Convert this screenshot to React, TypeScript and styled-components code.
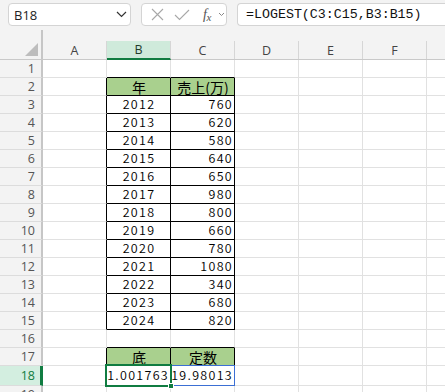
import React from "react";
import styled, { createGlobalStyle, css } from "styled-components";

const GlobalStyle = createGlobalStyle`
  html, body { margin: 0; padding: 0; background: #ffffff; overflow: hidden; }
  * { box-sizing: border-box; }
`;

const COLS = ["A", "B", "C", "D", "E", "F", "G"];
const GRID = "43px repeat(7, 64px)";
const GRIDLINE = "#e1e1e1";
const GREEN = "#107c41";

const Page = styled.div`
  width: 445px;
  height: 392px;
  overflow: hidden;
  background: #f3f3f3;
  font-family: "Open Sans", "Noto Sans", sans-serif;
`;

const Toolbar = styled.div`
  display: flex;
  align-items: flex-start;
  height: 30px;
  padding: 3px 0 0 8px;
  gap: 10px;
`;

const Box = styled.div<{ $w?: number; $grow?: boolean }>`
  height: 23px;
  background: #ffffff;
  border: 1px solid #d4d4d4;
  border-radius: 4px;
  display: flex;
  align-items: center;
  flex-shrink: 0;
  ${(p) => (p.$w ? css`width: ${p.$w}px;` : "")}
  ${(p) => (p.$grow ? css`flex: 1 0 auto; border-right: none; border-radius: 4px 0 0 4px;` : "")}
`;

const NameText = styled.span`
  flex: 1;
  padding-left: 5px;
  font-family: "Open Sans", "Noto Sans", sans-serif;
  font-size: 13px;
  color: #222;
`;

const FormulaText = styled.span`
  padding-left: 8px;
  font-family: "Liberation Mono", "DejaVu Sans Mono", monospace;
  font-size: 13.3px;
  color: #111;
  white-space: nowrap;
`;

const IconSlot = styled.span<{ $w: number; $ml?: number }>`
  display: inline-flex;
  align-items: center;
  justify-content: center;
  width: ${(p) => p.$w}px;
  margin-left: ${(p) => p.$ml ?? 0}px;
`;

const Fx = styled.span`
  font-family: "Liberation Serif", "DejaVu Serif", serif;
  font-style: italic;
  font-size: 14px;
  color: #555;
  letter-spacing: -0.5px;
  span { font-size: 11px; position: relative; top: 2px; }
`;

const HeaderRow = styled.div`
  display: grid;
  grid-template-columns: ${GRID};
  height: 30px;
  border-bottom: 1px solid #c9c9c9;
  background: #f3f3f3;
`;

const Corner = styled.div`
  position: relative;
  border-right: 2px solid #c6c6c6;
`;

const CornerTri = styled.svg`
  position: absolute;
  right: 3px;
  bottom: 3px;
`;

const ColHead = styled.div<{ $sel?: boolean }>`
  align-self: end;
  height: 18px;
  border-right: 1px solid #d6d6d6;
  display: flex;
  align-items: center;
  justify-content: center;
  font-size: 12.5px;
  color: #444;
  overflow: hidden;
  ${(p) =>
    p.$sel &&
    css`
      background: #cfeadb;
      border-bottom: 2px solid ${GREEN};
      color: #1f3b2b;
      height: 19px;
      margin-bottom: -1px;
    `}
`;

const Row = styled.div<{ $h: number }>`
  display: grid;
  grid-template-columns: ${GRID};
  height: ${(p) => p.$h}px;
  background: #ffffff;
`;

const RowHead = styled.div<{ $sel?: boolean }>`
  background: #f3f3f3;
  border-right: 2px solid #c6c6c6;
  border-bottom: 1px solid #dcdcdc;
  display: flex;
  align-items: center;
  justify-content: flex-end;
  padding-right: 6px;
  font-size: 12.5px;
  color: #555;
  overflow: hidden;
  ${(p) =>
    p.$sel &&
    css`
      background: #d3eee0;
      border-right: 3px solid ${GREEN};
      padding-right: 5px;
      color: ${GREEN};
    `}
`;

type CellProps = {
  $rb: string;
  $bb: string;
  $fill?: boolean;
  $align: "left" | "center" | "right";
  $cjk?: boolean;
  $sel?: boolean;
  $ref?: boolean;
};

const Cell = styled.div<CellProps>`
  position: relative;
  border-right: 1px solid ${(p) => p.$rb};
  border-bottom: 1px solid ${(p) => p.$bb};
  background: ${(p) => (p.$fill ? "#a9d08e" : "#ffffff")};
  display: flex;
  align-items: center;
  justify-content: ${(p) =>
    p.$align === "left" ? "flex-start" : p.$align === "center" ? "center" : "flex-end"};
  padding: 0 1px 0 2px;
  font-family: "Noto Sans CJK JP", "Noto Sans", sans-serif;
  font-weight: ${(p) => (p.$cjk ? 400 : 350)};
  font-size: ${(p) => (p.$cjk ? "14px" : "12.5px")};
  letter-spacing: ${(p) => (p.$cjk ? "0" : "1.3px")};
  color: #000;
  white-space: nowrap;
  line-height: 1;
  ${(p) =>
    p.$sel &&
    css`
      &::after {
        content: "";
        position: absolute;
        left: -2px;
        top: -2px;
        right: -2px;
        bottom: -2px;
        border: 2px solid ${GREEN};
        pointer-events: none;
        z-index: 2;
      }
    `}
  ${(p) =>
    p.$ref &&
    css`
      &::after {
        content: "";
        position: absolute;
        left: 0;
        top: -1px;
        right: -1px;
        bottom: -1px;
        border: 1px solid #3b6fd4;
        pointer-events: none;
      }
    `}
`;

const Handle = styled.span`
  position: absolute;
  right: -4px;
  bottom: -4px;
  width: 6px;
  height: 6px;
  background: ${GREEN};
  border: 1px solid #fff;
  z-index: 3;
`;

type Content = { text: string; align: "left" | "center" | "right"; cjk?: boolean; fill?: boolean };

const sales = [760, 620, 580, 640, 650, 980, 800, 660, 780, 1080, 340, 680, 820];

function cellAt(r: number, c: number): Content | null {
  if (r === 2) {
    if (c === 1) return { text: "年", align: "center", cjk: true, fill: true };
    if (c === 2) return { text: "売上(万)", align: "center", cjk: true, fill: true };
  }
  if (r >= 3 && r <= 15) {
    if (c === 1) return { text: String(2009 + r), align: "center" };
    if (c === 2) return { text: String(sales[r - 3]), align: "right" };
  }
  if (r === 17) {
    if (c === 1) return { text: "底", align: "center", cjk: true, fill: true };
    if (c === 2) return { text: "定数", align: "center", cjk: true, fill: true };
  }
  if (r === 18) {
    if (c === 1) return { text: "1.001763", align: "right" };
    if (c === 2) return { text: "19.98013", align: "right" };
  }
  return null;
}

const inTable = (r: number, c: number) =>
  (c === 1 || c === 2) && ((r >= 2 && r <= 15) || r === 17 || r === 18);

const rows = Array.from({ length: 19 }, (_, i) => i + 1);

export default function App() {
  return (
    <Page>
      <GlobalStyle />
      <Toolbar>
        <Box $w={123}>
          <NameText>B18</NameText>
          <IconSlot $w={18}>
            <svg width="11" height="7" viewBox="0 0 11 7">
              <path d="M1 1 L5.5 5.5 L10 1" fill="none" stroke="#333" strokeWidth="1.2" />
            </svg>
          </IconSlot>
        </Box>
        <Box $w={86}>
          <IconSlot $w={14} $ml={8}>
            <svg width="13" height="13" viewBox="0 0 13 13">
              <path d="M1 1 L12 12 M12 1 L1 12" stroke="#a8a8a8" strokeWidth="1.1" fill="none" />
            </svg>
          </IconSlot>
          <IconSlot $w={16} $ml={10}>
            <svg width="16" height="12" viewBox="0 0 16 12">
              <path d="M1 6 L5.5 10.5 L15 1" stroke="#a8a8a8" strokeWidth="1.1" fill="none" />
            </svg>
          </IconSlot>
          <IconSlot $w={18} $ml={8}>
            <Fx>
              f<span>x</span>
            </Fx>
          </IconSlot>
          <IconSlot $w={8} $ml={1}>
            <svg width="7" height="5" viewBox="0 0 7 5">
              <path d="M1 1 L3.5 3.5 L6 1" fill="none" stroke="#888" strokeWidth="1" />
            </svg>
          </IconSlot>
        </Box>
        <Box $grow>
          <FormulaText>=LOGEST(C3:C15,B3:B15)</FormulaText>
        </Box>
      </Toolbar>
      <HeaderRow>
        <Corner>
          <CornerTri width="13" height="13" viewBox="0 0 13 13">
            <path d="M13 0 L13 13 L0 13 Z" fill="#bdbdbd" />
          </CornerTri>
        </Corner>
        {COLS.map((c) => (
          <ColHead key={c} $sel={c === "B"}>
            {c}
          </ColHead>
        ))}
      </HeaderRow>
      {rows.map((r) => (
        <Row key={r} $h={r === 18 ? 20 : 18}>
          <RowHead $sel={r === 18}>{r}</RowHead>
          {COLS.map((_, c) => {
            const content = cellAt(r, c);
            const rb = inTable(r, c) || inTable(r, c + 1) ? "#000" : GRIDLINE;
            const bb = inTable(r, c) || inTable(r + 1, c) ? "#000" : GRIDLINE;
            const sel = r === 18 && c === 1;
            const ref = r === 18 && c === 2;
            return (
              <Cell
                key={c}
                $rb={rb}
                $bb={bb}
                $fill={content?.fill}
                $align={content?.align ?? "left"}
                $cjk={content?.cjk}
                $sel={sel}
                $ref={ref}
              >
                {content?.text}
                {sel && <Handle />}
              </Cell>
            );
          })}
        </Row>
      ))}
    </Page>
  );
}
